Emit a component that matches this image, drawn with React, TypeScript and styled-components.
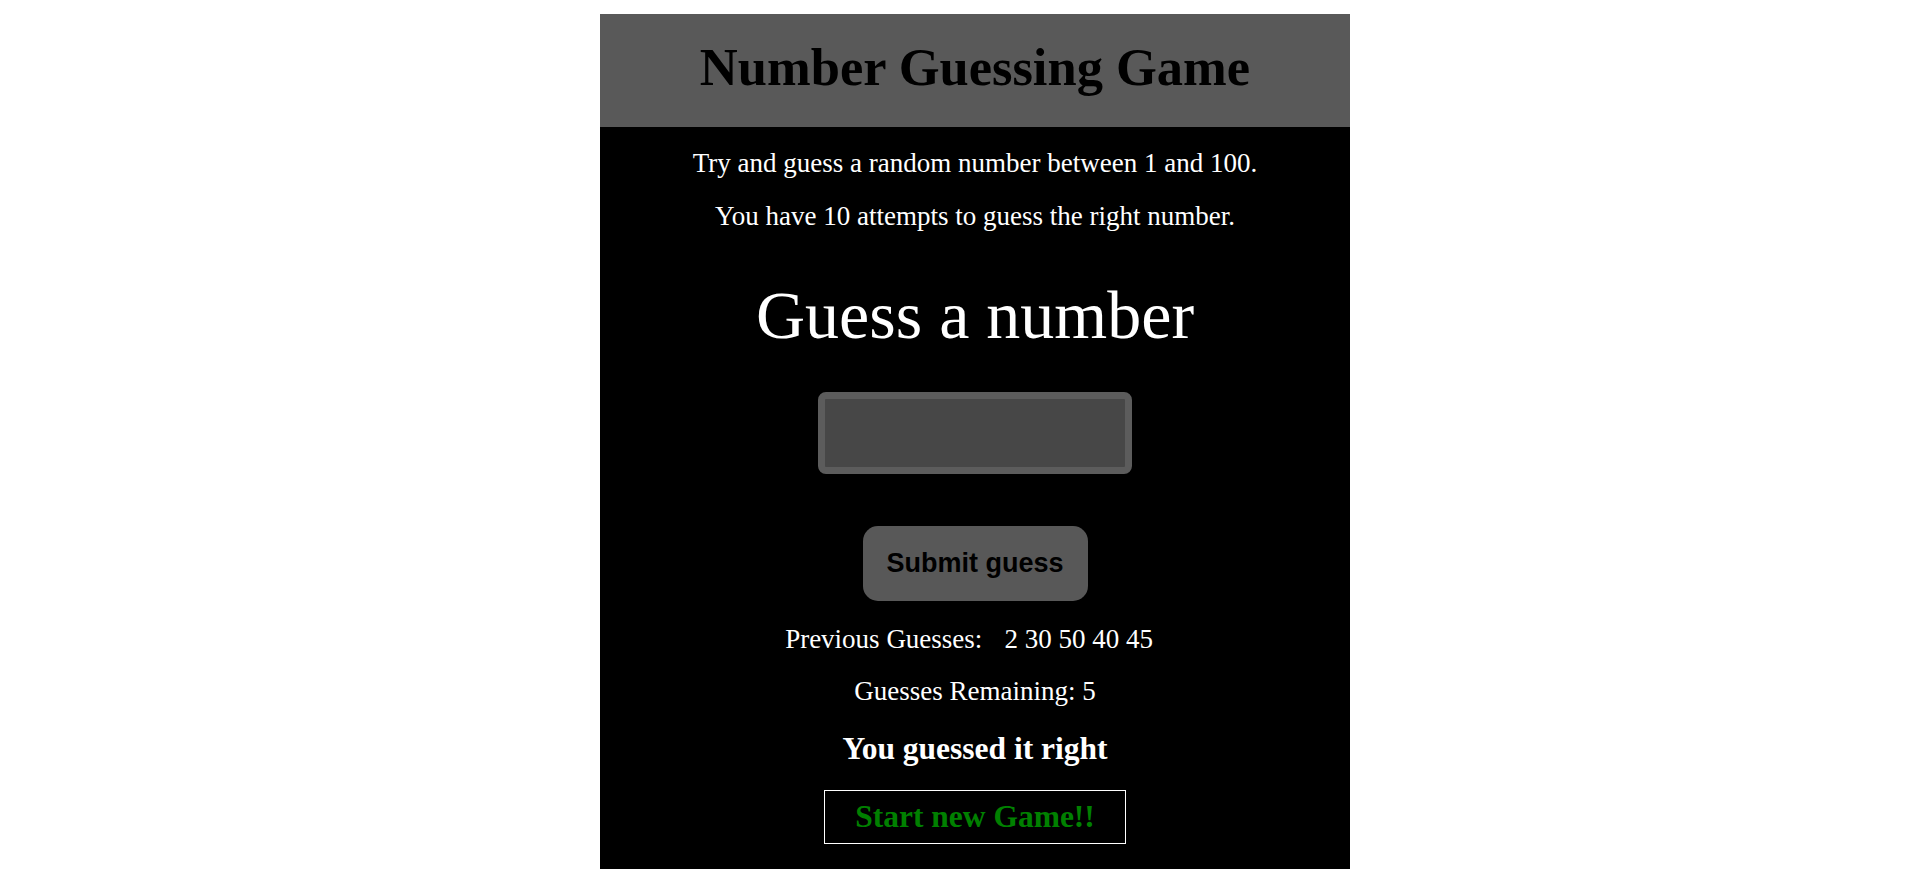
import React from "react";
import styled, { createGlobalStyle } from "styled-components";

const GlobalStyle = createGlobalStyle`
  html, body {
    margin: 0;
    padding: 0;
    background: #ffffff;
  }
  body {
    font-family: "Liberation Serif", "Times New Roman", serif;
  }
`;

const Page = styled.div`
  display: flex;
  justify-content: flex-start;
  padding: 14px 0 0 600px;
`;

const Wrapper = styled.main`
  width: 750px;
  background: #000000;
  display: flex;
  flex-direction: column;
  align-items: center;
  padding-bottom: 25px;
`;

const Header = styled.h1`
  align-self: stretch;
  margin: 0;
  padding: 23px 0 29px;
  background: #595959;
  color: #000000;
  font-family: "Liberation Serif", "Times New Roman", serif;
  font-weight: 700;
  font-size: 52.5px;
  line-height: 61px;
  text-align: center;
`;

const Text = styled.p<{ $top: number }>`
  margin: ${(p) => p.$top}px 0 0;
  color: #ffffff;
  font-size: 27px;
  line-height: 31px;
  text-align: center;
`;

const Heading = styled.h2`
  margin: 44px 0 0;
  color: #ffffff;
  font-weight: 400;
  font-size: 68px;
  line-height: 78px;
`;

const Form = styled.form`
  display: flex;
  flex-direction: column;
  align-items: center;
`;

const Input = styled.input`
  box-sizing: border-box;
  width: 314px;
  height: 82px;
  margin-top: 38px;
  background: #474747;
  border: 7px solid #5c5c5c;
  border-radius: 8px;
  outline: none;
  color: #ffffff;
  font-size: 27px;
  text-align: center;
`;

const SubmitButton = styled.button`
  box-sizing: border-box;
  width: 225px;
  height: 75px;
  margin-top: 52px;
  background: #585858;
  border: none;
  border-radius: 15px;
  color: #000000;
  font-family: "Liberation Sans", Arial, sans-serif;
  font-weight: 700;
  font-size: 27px;
  cursor: pointer;
`;

const Guesses = styled.span`
  margin: 0 12px 0 22px;
`;

const Result = styled.h3`
  margin: 24px 0 0;
  color: #ffffff;
  font-weight: 700;
  font-size: 31.5px;
  line-height: 36px;
`;

const NewGame = styled.button`
  box-sizing: border-box;
  width: 302px;
  height: 54px;
  margin-top: 23px;
  background: #000000;
  border: 1px solid #ffffff;
  color: #008000;
  font-family: "Liberation Serif", "Times New Roman", serif;
  font-weight: 700;
  font-size: 31.5px;
  line-height: 36px;
  padding: 0;
  cursor: pointer;
`;

export default function App() {
  const guesses = [2, 30, 50, 40, 45];
  return (
    <>
      <GlobalStyle />
      <Page>
        <Wrapper>
          <Header>Number Guessing Game</Header>
          <Text $top={21}>Try and guess a random number between 1 and 100.</Text>
          <Text $top={22}>You have 10 attempts to guess the right number.</Text>
          <Heading>Guess a number</Heading>
          <Form onSubmit={(e) => e.preventDefault()}>
            <Input type="text" aria-label="Guess" />
            <SubmitButton type="submit">Submit guess</SubmitButton>
          </Form>
          <Text $top={23}>
            Previous Guesses:<Guesses>{guesses.join(" ")}</Guesses>
          </Text>
          <Text $top={21}>Guesses Remaining: 5</Text>
          <Result>You guessed it right</Result>
          <NewGame type="button">Start new Game!!</NewGame>
        </Wrapper>
      </Page>
    </>
  );
}
